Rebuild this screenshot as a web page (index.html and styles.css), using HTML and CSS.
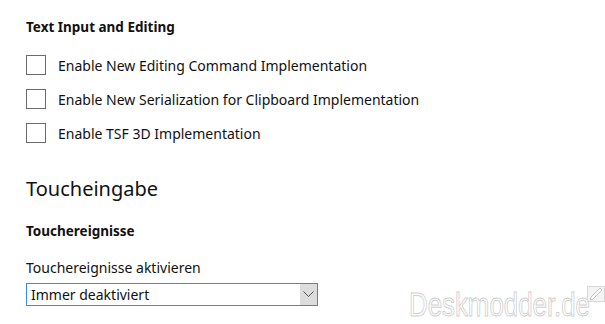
FILE: index.html
```html
<!DOCTYPE html>
<html lang="de">
<head>
  <meta charset="UTF-8">
  <title>Flags</title>
  <link rel="stylesheet" href="styles.css">
</head>
<body>
  <div class="page">
    <h3 class="group-title">Text Input and Editing</h3>
    <label class="check-row"><span class="box"></span>Enable New Editing Command Implementation</label>
    <label class="check-row"><span class="box"></span>Enable New Serialization for Clipboard Implementation</label>
    <label class="check-row"><span class="box"></span>Enable TSF 3D Implementation</label>

    <h2 class="section-title">Toucheingabe</h2>
    <h3 class="group-title sub">Touchereignisse</h3>
    <div class="field-label">Touchereignisse aktivieren</div>
    <div class="select">
      <span class="select-value">Immer deaktiviert</span>
      <span class="select-arrow">
        <svg width="11" height="7" viewBox="0 0 11 7"><path d="M0.5 0.5 L5.5 5.5 L10.5 0.5" fill="none" stroke="#555" stroke-width="1"/></svg>
      </span>
    </div>
  </div>
  <span class="wm-text">Deskmodder.de</span>
  <svg class="wm-icon" width="18" height="16" viewBox="0 0 18 16">
    <rect x="0.5" y="0.5" width="17" height="15" fill="#f4f4f4" stroke="#d8d8d8"/>
    <path d="M3 14 L4 11 L13 2 L15 4 L6 13 Z" fill="#fff" stroke="#c4c4c4"/>
  </svg>
</body>
</html>
```

FILE: styles.css
```css
body {
  margin: 0;
  background: #fff;
  color: #111;
  font-family: "Noto Sans", "Open Sans", sans-serif;
}
.page {
  padding: 18px 0 0 26px;
}
.group-title {
  margin: 0 0 19px;
  font-size: 13.5px;
  font-weight: 700;
  line-height: 18px;
}
.check-row {
  display: flex;
  align-items: center;
  gap: 12px;
  height: 20px;
  margin-bottom: 14px;
  font-size: 14px;
}
.box {
  width: 18px;
  height: 18px;
  border: 1px solid #6b6b6b;
  flex: none;
}
.section-title {
  margin: 33px 0 0;
  font-size: 20px;
  font-weight: 400;
  line-height: 26px;
}
.group-title.sub {
  margin-top: 20px;
  margin-bottom: 0;
}
.field-label {
  margin-top: 19px;
  font-size: 14px;
  line-height: 18px;
}
.select {
  display: flex;
  width: 290px;
  height: 21px;
  margin-top: 6px;
  border: 1px solid #3b8fd0;
}
.select-value {
  flex: 1;
  padding-left: 4px;
  font-size: 14px;
  line-height: 21px;
}
.select-arrow {
  width: 17px;
  display: flex;
  align-items: center;
  justify-content: center;
  background: #dcdcdc;
}
.wm-text {
  position: absolute;
  left: 409px;
  top: 285px;
  font-family: "Liberation Sans", sans-serif;
  font-size: 34px;
  line-height: 38px;
  color: #fff;
  -webkit-text-stroke: 1px #d0d0d0;
  transform: scaleX(0.76);
  transform-origin: left top;
  white-space: nowrap;
}
.wm-icon {
  position: absolute;
  left: 587px;
  top: 286px;
}
```
